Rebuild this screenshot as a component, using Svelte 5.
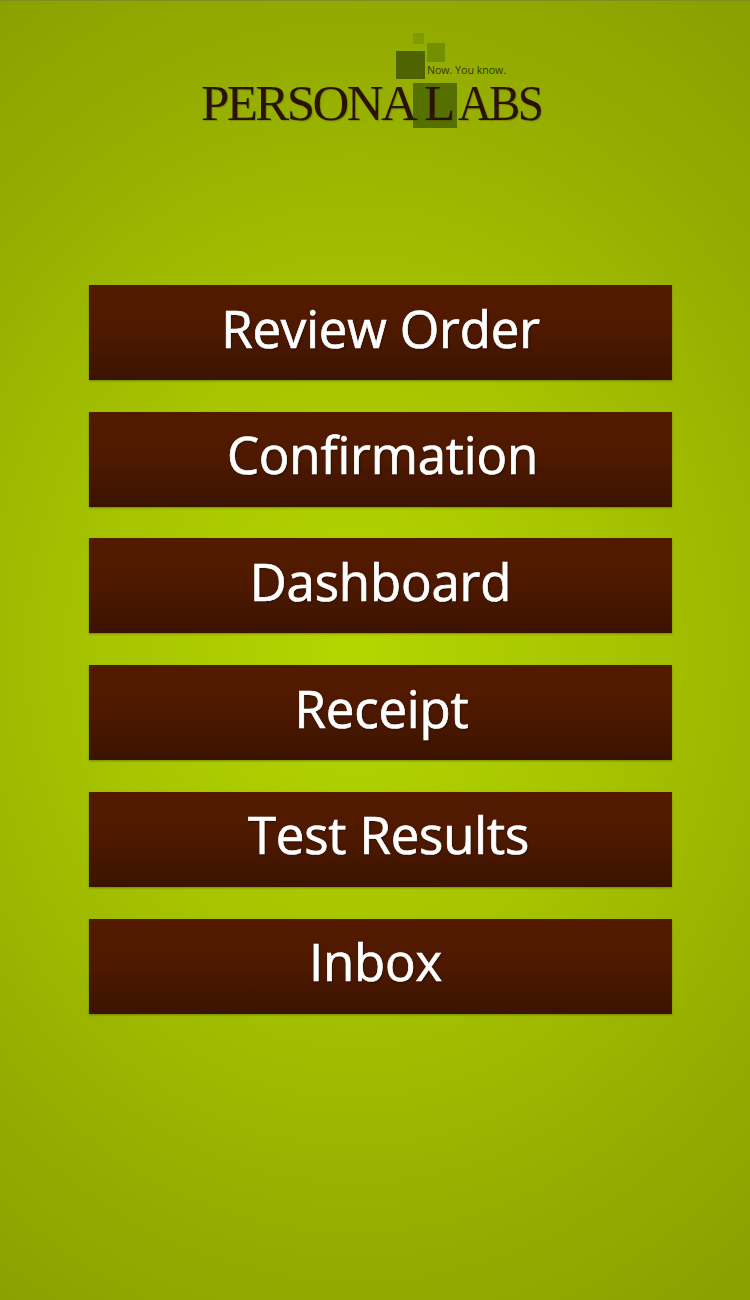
<script>
  // nudge: the labels are not quite centred in the original
  const items = [
    { label: 'Review Order', nudge: 0 },
    { label: 'Confirmation', nudge: 2 },
    { label: 'Dashboard', nudge: 0 },
    { label: 'Receipt', nudge: 1 },
    { label: 'Test Results', nudge: 8 },
    { label: 'Inbox', nudge: -5 }
  ];
</script>

<div class="page">
  <header class="logo">
    <span class="sq sq-a"></span>
    <span class="sq sq-b"></span>
    <span class="sq sq-c"></span>
    <span class="sq sq-d"></span>
    <span class="tag">Now. You know.</span>
    <span class="word first">PERSONA</span>
    <span class="word letter">L</span>
    <span class="word last">ABS</span>
  </header>

  <nav class="menu">
    {#each items as item}
      <button type="button">
        <span style="transform: translateX({item.nudge}px)">{item.label}</span>
      </button>
    {/each}
  </nav>
</div>

<style>
  :global(body) {
    margin: 0;
  }

  .page {
    box-sizing: border-box;
    width: 750px;
    height: 1300px;
    overflow: hidden;
    padding-top: 284px;
    position: relative;
    border-top: 1px solid #7d8f1c;
    background: radial-gradient(ellipse 640px 770px at 355px 650px, #b4d600 0%, #a6c400 40%, #96ae00 75%, #8aa200 100%);
  }

  .logo {
    position: absolute;
    left: 190px;
    top: 19px;
    width: 360px;
    height: 120px;
  }

  .sq {
    position: absolute;
    display: block;
  }

  .sq-a { left: 223px; top: 13px; width: 11px; height: 11px; background: #7f9b00; }
  .sq-b { left: 237px; top: 23px; width: 18px; height: 19px; background: #739000; }
  .sq-c { left: 206px; top: 31px; width: 29px; height: 28px; background: #4f6400; }
  .sq-d { left: 223px; top: 63px; width: 44px; height: 45px; background: #567000; }

  .tag {
    position: absolute;
    left: 237px;
    top: 43px;
    font: 10.6px/15px "Open Sans", sans-serif;
    color: #2f3a05;
    white-space: nowrap;
  }

  .word {
    position: absolute;
    top: 63px;
    font-family: "Liberation Serif", serif;
    font-size: 51px;
    line-height: 40px;
    color: #2a1206;
    white-space: nowrap;
    text-shadow: 1px 1px 1px rgba(60, 70, 0, 0.3);
  }

  .first { left: 11px; letter-spacing: -2.6px; }
  .letter { left: 234px; }
  .last {
    left: 268px;
    letter-spacing: -3px;
    transform: scaleX(0.92);
    transform-origin: left center;
  }

  .menu {
    display: flex;
    flex-direction: column;
    gap: 31.72px;
    width: 583px;
    margin-left: 89px;
  }

  button {
    display: block;
    height: 95px;
    padding: 0 0 10px;
    border: 0;
    background: linear-gradient(#521a00 0%, #4f1900 45%, #3a1300 100%);
    box-shadow: 0 1px 2px rgba(60, 70, 0, 0.45);
    color: #fff;
    font-family: "Open Sans", sans-serif;
    font-size: 51px;
    letter-spacing: -0.2px;
    line-height: 60px;
    text-align: center;
    text-shadow: 1px 1px 2px rgba(0, 0, 0, 0.5);
    -webkit-text-stroke: 0.7px #fff;
  }

  button span {
    display: inline-block;
  }
</style>
